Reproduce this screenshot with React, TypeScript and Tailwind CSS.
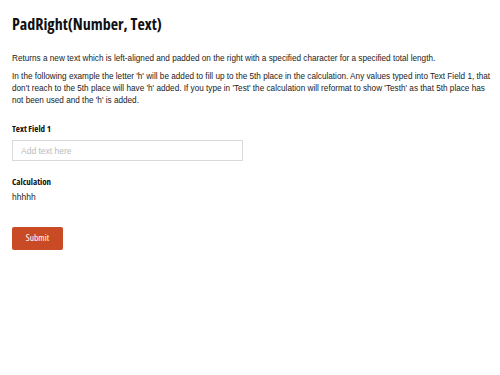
import { useState } from "react";

export default function App() {
  const [value, setValue] = useState("");
  const display = value.length >= 5 ? value : value + "h".repeat(5 - value.length);

  return (
    <main className="min-h-screen bg-white pl-3 pr-[2px] pt-[14px] text-[#222]" style={{ fontFamily: '"Liberation Sans", Arial, sans-serif' }}>
      <h1 className="text-[16px] font-bold leading-5 text-[#111] [font-family:'Open_Sans',sans-serif] [font-stretch:75%]">
        PadRight(Number, Text)
      </h1>

      <p className="mt-[19px] text-[8.2px] leading-3">
        Returns a new text which is left-aligned and padded on the right with a specified character for a specified total length.
      </p>
      <p className="mt-[6px] text-[8.2px] leading-3">
        In the following example the letter 'h' will be added to fill up to the 5th place in the calculation. Any values typed into Text Field 1, that
        don't reach to the 5th place will have 'h' added. If you type in 'Test' the calculation will reformat to show 'Testh' as that 5th place has
        not been used and the 'h' is added.
      </p>

      <div className="mt-[16px]">
        <label className="block text-[9px] font-bold leading-3 text-[#111] [font-family:'Open_Sans',sans-serif] [font-stretch:75%]">
          Text Field 1
        </label>
        <input
          value={value}
          onChange={(e) => setValue(e.target.value)}
          placeholder="Add text here"
          className="mt-[5px] block h-[21px] w-[231px] border border-[#d9d9d9] px-2 text-[8.5px] outline-none placeholder:text-[#bbb]"
        />
      </div>

      <div className="mt-[15px]">
        <div className="text-[9px] font-bold leading-3 text-[#111] [font-family:'Open_Sans',sans-serif] [font-stretch:75%]">
          Calculation
        </div>
        <div className="mt-[3px] text-[8.5px] leading-3">{display}</div>
      </div>

      <button
        type="button"
        className="mt-[24px] h-[23px] w-[51px] rounded-[2px] bg-[#c84b25] text-[9.5px] text-white [font-family:'Open_Sans',sans-serif] [font-stretch:75%]"
      >
        Submit
      </button>
    </main>
  );
}
